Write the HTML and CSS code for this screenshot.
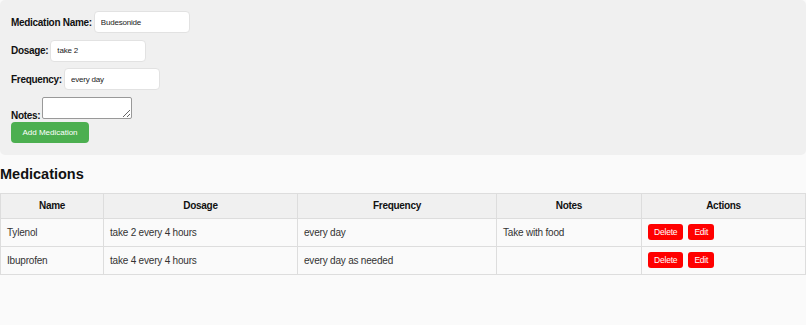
FILE: index.html
```html
<!DOCTYPE html>
<html lang="en">
<head>
    <meta charset="UTF-8">
    <meta name="viewport" content="width=device-width, initial-scale=1.0">
    <title>Medication Tracker</title>
    <link rel="stylesheet" href="styles.css">
</head>
<body>
    <form class="med-form">
        <div class="field">
            <label for="name">Medication Name:</label>
            <input type="text" id="name" value="Budesonide">
        </div>
        <div class="field">
            <label for="dosage">Dosage:</label>
            <input type="text" id="dosage" value="take 2">
        </div>
        <div class="field">
            <label for="frequency">Frequency:</label>
            <input type="text" id="frequency" value="every day">
        </div>
        <div class="field notes-field">
            <label for="notes">Notes:</label>
            <textarea id="notes"></textarea>
        </div>
        <button type="button" class="add-btn">Add Medication</button>
    </form>

    <h2>Medications</h2>
    <table class="med-table">
        <thead>
            <tr>
                <th class="col-name">Name</th>
                <th class="col-dosage">Dosage</th>
                <th class="col-frequency">Frequency</th>
                <th class="col-notes">Notes</th>
                <th class="col-actions">Actions</th>
            </tr>
        </thead>
        <tbody>
            <tr>
                <td>Tylenol</td>
                <td>take 2 every 4 hours</td>
                <td>every day</td>
                <td>Take with food</td>
                <td><button class="btn-red">Delete</button><button class="btn-red">Edit</button></td>
            </tr>
            <tr>
                <td>Ibuprofen</td>
                <td>take 4 every 4 hours</td>
                <td>every day as needed</td>
                <td></td>
                <td><button class="btn-red">Delete</button><button class="btn-red">Edit</button></td>
            </tr>
        </tbody>
    </table>
</body>
</html>
```

FILE: styles.css
```css
body {
    margin: 0;
    background-color: #fafafa;
    font-family: "Liberation Sans", Arial, sans-serif;
    color: #222;
}
.med-form {
    background-color: #f0f0f0;
    padding: 11px 11px 12px;
    border-radius: 5px;
}
.field {
    display: flex;
    align-items: center;
    gap: 2px;
    margin-bottom: 6.5px;
}
.field label {
    font-size: 10px;
    letter-spacing: -0.3px;
    font-weight: bold;
    color: #111;
}
.field input {
    box-sizing: border-box;
    width: 96px;
    height: 22px;
    padding: 0 6px;
    border: 1px solid #e2e2e2;
    border-radius: 4px;
    background: #fff;
    font-family: inherit;
    font-size: 8px;
    letter-spacing: -0.2px;
    color: #222;
}
.notes-field {
    align-items: flex-end;
    margin-bottom: 2px;
}
.notes-field label {
    line-height: 1;
    margin-bottom: -2px;
}
.notes-field textarea {
    box-sizing: border-box;
    width: 90px;
    height: 22px;
    border: 1px solid #999;
    border-radius: 2px;
    background: #fff;
    font-family: inherit;
}
.add-btn {
    width: 78px;
    height: 21px;
    padding: 0;
    border: none;
    border-radius: 4px;
    background-color: #4caf50;
    color: #fff;
    font-family: inherit;
    font-size: 8px;
    cursor: pointer;
}
h2 {
    margin: 11px 0 11px;
    font-size: 14.5px;
    font-weight: bold;
    color: #111;
}
.med-table {
    width: 100%;
    border-collapse: collapse;
    font-size: 10px;
    letter-spacing: -0.2px;
    color: #333;
}
.med-table th,
.med-table td {
    border: 1px solid #ddd;
    padding: 5px 6px;
    text-align: left;
}
.med-table th {
    background-color: #f0f0f0;
    text-align: center;
    color: #111;
    height: 14px;
    letter-spacing: -0.3px;
}
.med-table td {
    height: 17px;
}
.col-name { width: 90px; }
.col-dosage { width: 181px; }
.col-frequency { width: 186px; }
.col-notes { width: 132px; }
.btn-red {
    height: 16px;
    padding: 0 6px;
    margin-right: 5px;
    border: none;
    border-radius: 3px;
    background-color: #f00;
    color: #fff;
    font-family: inherit;
    font-size: 8.5px;
    letter-spacing: -0.2px;
    vertical-align: middle;
    cursor: pointer;
}
```
